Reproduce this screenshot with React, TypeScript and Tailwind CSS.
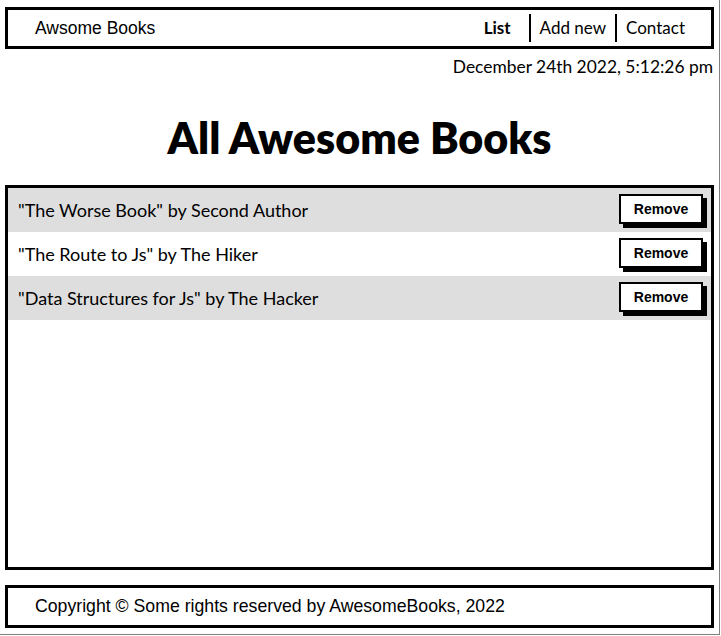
import React from "react";

const books = [
  { title: "The Worse Book", author: "Second Author" },
  { title: "The Route to Js", author: "The Hiker" },
  { title: "Data Structures for Js", author: "The Hacker" },
];

export default function App() {
  return (
    <div className="w-[720px] h-[635px] border-r border-b border-[#808080] bg-white text-black flex flex-col">
      <nav className="mx-[5px] mt-[7px] h-[42px] shrink-0 border-[3px] border-black flex items-center justify-between pl-[27px] pr-[26px]">
        <span className="text-[17.5px] font-['Liberation_Sans',sans-serif]">Awsome Books</span>
        <ul className="flex items-center h-full font-['Lato',sans-serif] text-[17px]">
          <li className="pr-[18px] font-bold">List</li>
          <li className="border-l-2 border-black px-[9px] h-[28px] flex items-center">Add new</li>
          <li className="border-l-2 border-black pl-[9px] h-[28px] flex items-center">Contact</li>
        </ul>
      </nav>
      <p className="text-right pr-[6px] mt-[6px] text-[17.4px] leading-[24px] font-['Lato',sans-serif]">
        December 24th 2022, 5:12:26 pm
      </p>
      <h1 className="text-center text-[43px] font-extrabold font-['Lato',sans-serif] leading-[48px] mt-[35px]">
        All Awesome Books
      </h1>
      <div className="mx-[5px] mt-[23px] h-[385px] shrink-0 border-[3px] border-black">
        {books.map((b, i) => (
          <div
            key={i}
            className={`h-[44px] flex items-center justify-between pl-[10px] pr-[8px] ${i % 2 === 0 ? "bg-[#dedede]" : "bg-white"}`}
          >
            <span className="text-[18px] font-['Lato',sans-serif]">
              "{b.title}" by {b.author}
            </span>
            <button className="w-[84px] h-[30px] bg-white border-2 border-black shadow-[4px_4px_0_#000] text-[14px] font-bold font-['Liberation_Sans',sans-serif] mb-[2px]">
              Remove
            </button>
          </div>
        ))}
      </div>
      <footer className="mx-[5px] mt-[15px] h-[43px] shrink-0 border-[3px] border-black flex items-center pl-[27px]">
        <span className="text-[17.7px] font-['Liberation_Sans',sans-serif]">
          Copyright © Some rights reserved by AwesomeBooks, 2022
        </span>
      </footer>
    </div>
  );
}
